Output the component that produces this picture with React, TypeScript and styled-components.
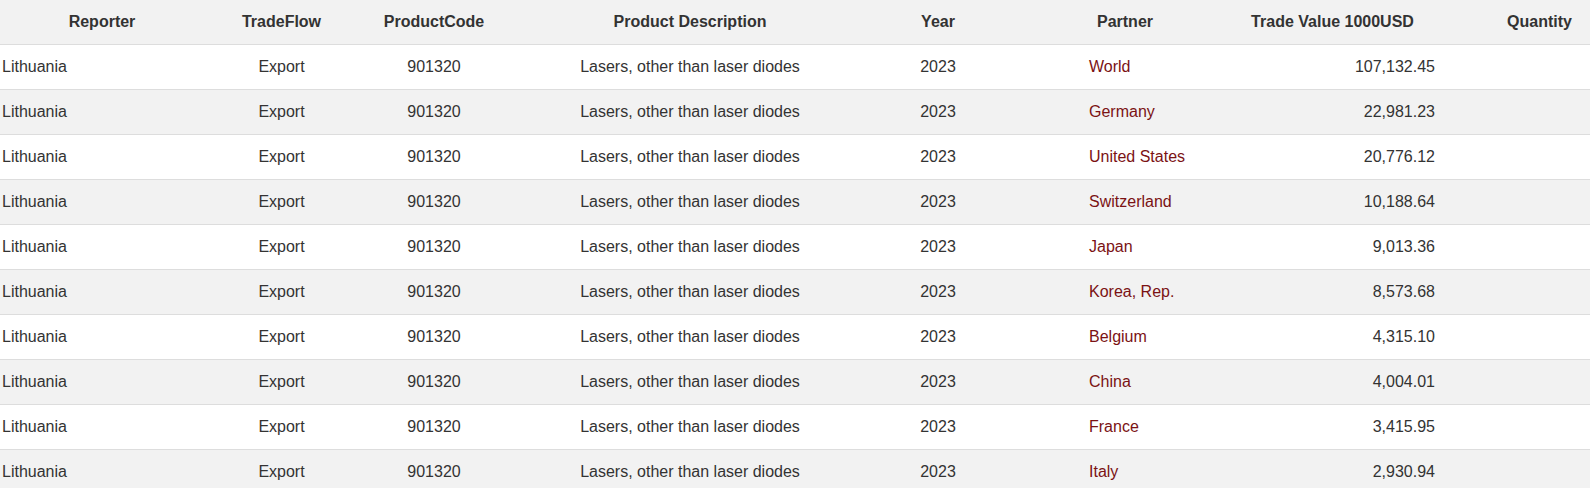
import React from 'react';
import styled, { createGlobalStyle } from 'styled-components';

const GlobalStyle = createGlobalStyle`
  body {
    margin: 0;
    background: #ffffff;
    font-family: 'Liberation Sans', Arial, sans-serif;
    color: #333333;
  }
`;

type Align = 'left' | 'center' | 'right';

interface IColumn {
  title: string;
  width: number;
  headPad: string;
  cellAlign: Align;
  cellPad: string;
}

const columns: IColumn[] = [
  { title: 'Reporter', width: 204, headPad: '0', cellAlign: 'left', cellPad: '0 0 0 2px' },
  { title: 'TradeFlow', width: 155, headPad: '0', cellAlign: 'center', cellPad: '0' },
  { title: 'ProductCode', width: 150, headPad: '0', cellAlign: 'center', cellPad: '0' },
  { title: 'Product Description', width: 362, headPad: '0', cellAlign: 'center', cellPad: '0' },
  { title: 'Year', width: 134, headPad: '0', cellAlign: 'center', cellPad: '0' },
  { title: 'Partner', width: 240, headPad: '0', cellAlign: 'left', cellPad: '0 0 0 84px' },
  { title: 'Trade Value 1000USD', width: 195, headPad: '0 20px 0 0', cellAlign: 'right', cellPad: '0 5px 0 0' },
  { title: 'Quantity', width: 150, headPad: '0 0 0 49px', cellAlign: 'center', cellPad: '0' },
];

const rows = [
  { partner: 'World', value: '107,132.45' },
  { partner: 'Germany', value: '22,981.23' },
  { partner: 'United States', value: '20,776.12' },
  { partner: 'Switzerland', value: '10,188.64' },
  { partner: 'Japan', value: '9,013.36' },
  { partner: 'Korea, Rep.', value: '8,573.68' },
  { partner: 'Belgium', value: '4,315.10' },
  { partner: 'China', value: '4,004.01' },
  { partner: 'France', value: '3,415.95' },
  { partner: 'Italy', value: '2,930.94' },
];

const Table = styled.table`
  width: 1590px;
  border-collapse: collapse;
  table-layout: fixed;
  font-size: 16px;
  line-height: 20px;
`;

const HeadCell = styled.th<{ $pad: string }>`
  height: 44px;
  padding: ${(p) => p.$pad};
  background: #f2f2f2;
  border-bottom: 1px solid #dddddd;
  font-weight: bold;
  text-align: center;
  color: #333333;
  white-space: nowrap;
`;

const Row = styled.tr<{ $striped: boolean }>`
  background: ${(p) => (p.$striped ? '#f2f2f2' : '#ffffff')};
  border-bottom: 1px solid #dddddd;
`;

const Cell = styled.td<{ $align: Align; $pad: string }>`
  height: 44px;
  padding: ${(p) => p.$pad};
  text-align: ${(p) => p.$align};
  white-space: nowrap;
`;

const PartnerName = styled.span`
  color: #7b1214;
`;

const App = () => {
  return (
    <>
      <GlobalStyle />
      <Table>
        <colgroup>
          {columns.map((c) => (
            <col key={c.title} style={{ width: c.width }} />
          ))}
        </colgroup>
        <thead>
          <tr>
            {columns.map((c) => (
              <HeadCell key={c.title} $pad={c.headPad}>
                {c.title}
              </HeadCell>
            ))}
          </tr>
        </thead>
        <tbody>
          {rows.map((r, i) => {
            const values = [
              'Lithuania',
              'Export',
              '901320',
              'Lasers, other than laser diodes',
              '2023',
              <PartnerName>{r.partner}</PartnerName>,
              r.value,
              '',
            ];
            return (
              <Row key={r.partner} $striped={i % 2 === 1}>
                {columns.map((c, j) => (
                  <Cell key={c.title} $align={c.cellAlign} $pad={c.cellPad}>
                    {values[j]}
                  </Cell>
                ))}
              </Row>
            );
          })}
        </tbody>
      </Table>
    </>
  );
};

export default App;
